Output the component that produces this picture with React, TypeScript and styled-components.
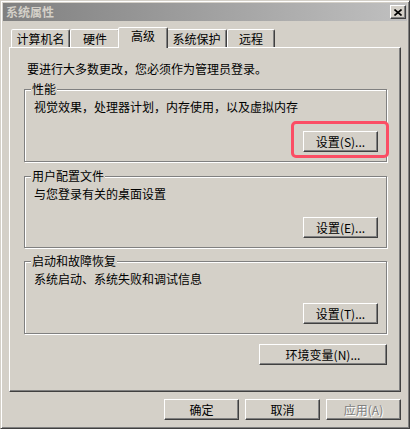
import React from "react";
import styled, { createGlobalStyle, css } from "styled-components";

const GlobalStyle = createGlobalStyle`
  html, body { margin: 0; padding: 0; background: #d4d0c8; }
  body {
    font-family: "Noto Sans CJK SC", "Liberation Sans", sans-serif;
    font-size: 12px;
    color: #000;
  }
`;

const FONT = `"Noto Sans CJK SC", "Liberation Sans", sans-serif`;

const Window = styled.div`
  box-sizing: border-box;
  width: 410px;
  height: 429px;
  background: #d4d0c8;
  border: 1px solid;
  border-color: #d4d0c8 #404040 #404040 #d4d0c8;
  box-shadow: inset 1px 1px 0 #fff, inset -1px -1px 0 #808080;
  padding: 2px;
  display: flex;
  flex-direction: column;
`;

const TitleBar = styled.div`
  height: 18px;
  background: linear-gradient(to right, #808080, #c0c0c0);
  display: flex;
  align-items: center;
  justify-content: space-between;
  padding: 0 1px 0 3px;
`;

const Title = styled.span`
  color: #d4d0c8;
  font-weight: bold;
  font-size: 12px;
  line-height: 18px;
`;

const CloseButton = styled.div`
  box-sizing: border-box;
  width: 16px;
  height: 14px;
  background: #d4d0c8;
  border: 1px solid;
  border-color: #fff #404040 #404040 #fff;
  box-shadow: inset -1px -1px 0 #808080;
  display: flex;
  align-items: center;
  justify-content: center;
`;

const Body = styled.div`
  display: flex;
  flex-direction: column;
  padding: 6px 0 0 6px;
`;

const TabRow = styled.div`
  display: flex;
  align-items: flex-end;
  height: 20px;
  padding-left: 2px;
  position: relative;
  z-index: 1;
`;

const Tab = styled.div<{ $active?: boolean; $w: number }>`
  box-sizing: border-box;
  width: ${(p) => p.$w}px;
  height: 18px;
  background: #d4d0c8;
  border: 1px solid;
  border-bottom: none;
  border-color: #fff #404040 transparent #fff;
  border-radius: 2px 2px 0 0;
  box-shadow: inset -1px 0 0 #808080;
  display: flex;
  align-items: center;
  justify-content: center;
  line-height: 14px;
  padding-top: 1px;
  flex-shrink: 0;
  ${(p) =>
    p.$active &&
    css`
      width: ${p.$w + 4}px;
      height: 21px;
      margin: 0 -2px -1px;
      padding-top: 0;
      padding-bottom: 4px;
      position: relative;
      z-index: 2;
    `}
`;

const Panel = styled.div`
  box-sizing: border-box;
  width: 392px;
  height: 345px;
  border: 1px solid;
  border-color: #fff #404040 #404040 #fff;
  box-shadow: inset -1px -1px 0 #808080;
  display: flex;
  flex-direction: column;
  padding: 14px 0 0 14px;
`;

const Intro = styled.div`
  line-height: 14px;
  height: 14px;
  margin-left: 3px;
  white-space: nowrap;
`;

const Group = styled.div<{ $h: number; $mt: number }>`
  box-sizing: border-box;
  position: relative;
  width: 363px;
  height: ${(p) => p.$h}px;
  margin-top: ${(p) => p.$mt}px;
  border: 1px solid #808080;
  box-shadow: 1px 1px 0 #fff, inset 1px 1px 0 #fff;
  display: flex;
  flex-direction: column;
  padding: 10px 8px 9px 9px;
`;

const Legend = styled.span`
  position: absolute;
  left: 6px;
  top: -8px;
  padding: 0 1px;
  background: #d4d0c8;
  line-height: 14px;
  white-space: nowrap;
`;

const Desc = styled.div`
  line-height: 14px;
  white-space: nowrap;
`;

const Button = styled.button<{ $w?: number }>`
  box-sizing: border-box;
  width: ${(p) => p.$w ?? 75}px;
  height: 21px;
  flex-shrink: 0;
  background: #d4d0c8;
  border: 1px solid;
  border-color: #fff #404040 #404040 #fff;
  box-shadow: inset -1px -1px 0 #808080;
  font-family: ${FONT};
  font-size: 12px;
  color: #000;
  padding: 0;
  display: flex;
  align-items: center;
  justify-content: center;
  line-height: 14px;
  &:disabled {
    color: #808080;
    text-shadow: 1px 1px 0 #fff;
  }
`;

const GroupButton = styled(Button)`
  margin-top: auto;
  align-self: flex-end;
`;

const EnvButton = styled(Button)`
  margin-top: 10px;
  margin-left: 235px;
`;

const Highlight = styled.div`
  position: absolute;
  left: 266px;
  top: 31px;
  width: 98px;
  height: 37px;
  box-sizing: border-box;
  border: 3px solid #fb4d64;
  border-radius: 5px;
  pointer-events: none;
`;

const Footer = styled.div`
  width: 392px;
  display: flex;
  justify-content: flex-end;
  gap: 6px;
  margin-top: 7px;
`;

const tabs = [
  { label: "计算机名", w: 59 },
  { label: "硬件", w: 50 },
  { label: "高级", w: 46, active: true },
  { label: "系统保护", w: 61 },
  { label: "远程", w: 48 },
];

export default function App() {
  return (
    <>
      <GlobalStyle />
      <Window>
        <TitleBar>
          <Title>系统属性</Title>
          <CloseButton>
            <svg width="8" height="7" viewBox="0 0 8 7">
              <path d="M0.5 0.5 L7.5 6.5 M7.5 0.5 L0.5 6.5" stroke="#000" strokeWidth="1.6" />
            </svg>
          </CloseButton>
        </TitleBar>
        <Body>
          <TabRow>
            {tabs.map((t) => (
              <Tab key={t.label} $w={t.w} $active={t.active}>
                {t.label}
              </Tab>
            ))}
          </TabRow>
          <Panel>
            <Intro>要进行大多数更改，您必须作为管理员登录。</Intro>
            <Group $h={73} $mt={13}>
              <Legend>性能</Legend>
              <Desc>视觉效果，处理器计划，内存使用，以及虚拟内存</Desc>
              <GroupButton>设置(S)...</GroupButton>
              <Highlight />
            </Group>
            <Group $h={72} $mt={14}>
              <Legend>用户配置文件</Legend>
              <Desc>与您登录有关的桌面设置</Desc>
              <GroupButton>设置(E)...</GroupButton>
            </Group>
            <Group $h={73} $mt={13}>
              <Legend>启动和故障恢复</Legend>
              <Desc>系统启动、系统失败和调试信息</Desc>
              <GroupButton>设置(T)...</GroupButton>
            </Group>
            <EnvButton $w={128}>环境变量(N)...</EnvButton>
          </Panel>
          <Footer>
            <Button>确定</Button>
            <Button>取消</Button>
            <Button disabled>应用(A)</Button>
          </Footer>
        </Body>
      </Window>
    </>
  );
}
